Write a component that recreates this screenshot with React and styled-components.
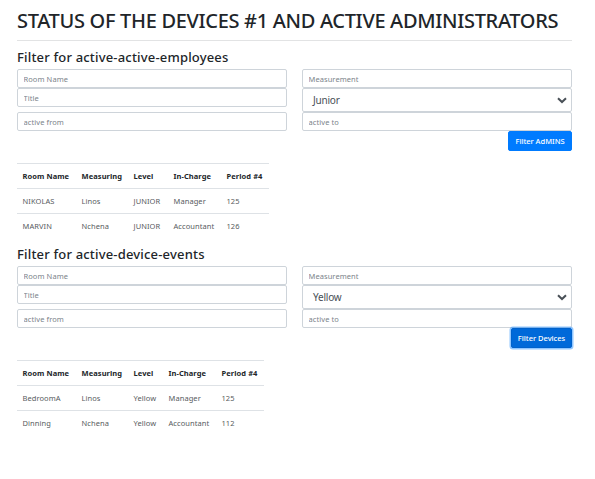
import React from "react";
import styled, { createGlobalStyle } from "styled-components";

const GlobalStyle = createGlobalStyle`
  *, *::before, *::after { box-sizing: border-box; }
  body {
    margin: 0;
    background: #fff;
    color: #212529;
    font-family: "Noto Sans", "Open Sans", sans-serif;
  }
`;

const Page = styled.main`
  width: 595px;
  height: 479px;
  padding: 0 23px 0 17px;
  overflow: hidden;
`;

const Title = styled.h1`
  height: 41px;
  margin: 0 0 8px;
  padding-top: 7px;
  border-bottom: 1px solid #e2e3e4;
  font-size: 20px;
  font-weight: 500;
  line-height: 28px;
  letter-spacing: -0.31px;
  white-space: nowrap;
`;

const Section = styled.section`
  height: 197px;
`;

const Heading = styled.h2`
  height: 20px;
  margin: 0;
  font-size: 13px;
  font-weight: 500;
  line-height: 17px;
  letter-spacing: 0.18px;
  white-space: nowrap;
`;

const Fields = styled.form`
  display: grid;
  grid-template-columns: 270px 270px;
  grid-template-rows: 19px 24px 19px 20px;
  column-gap: 15px;
  align-items: start;
  width: 555px;
`;

const Input = styled.input`
  width: 100%;
  height: 19px;
  margin: 0;
  padding: 1px 5.5px 0;
  border: 1px solid #ced4da;
  border-radius: 2px;
  background: #fff;
  font: 400 7.5px/16px "Noto Sans", sans-serif;
  letter-spacing: 0.08px;
  outline: none;
  &::placeholder { color: #7b838a; opacity: 1; }
`;

const SelectBox = styled.div`
  display: flex;
  align-items: center;
  justify-content: space-between;
  height: 24px;
  padding: 0 4px 0 10px;
  border: 1px solid #ced4da;
  border-radius: 2px;
  color: #495057;
  font-size: 10px;
  line-height: 20px;
  letter-spacing: -0.2px;
`;

const Chevron = styled.svg`
  width: 10px;
  height: 7px;
`;

const Submit = styled.button`
  grid-column: 2;
  justify-self: end;
  width: ${(p) => p.$width}px;
  height: 20px;
  padding: 0;
  border: 1px solid ${(p) => (p.$focused ? "#0062cc" : "#007bff")};
  border-radius: 2px;
  background: ${(p) => (p.$focused ? "#0069d9" : "#007bff")};
  box-shadow: ${(p) => (p.$focused ? "0 0 0 1.5px rgba(38, 143, 255, 0.5)" : "none")};
  color: #fff;
  font: 500 7.5px/18px "Noto Sans", sans-serif;
  letter-spacing: -0.02px;
  white-space: nowrap;
`;

const Table = styled.table`
  width: ${(p) => p.$width}px;
  margin-top: 12px;
  border-collapse: separate;
  border-spacing: 0;
  table-layout: fixed;
  font-size: 7.5px;
  line-height: 12px;
`;

const Col = styled.col`
  width: ${(p) => p.$width}px;
`;

const HeadCell = styled.th`
  height: 25px;
  padding: 0 0 1px 5.5px;
  border-top: 1px solid #dee2e6;
  font-weight: 700;
  letter-spacing: 0.08px;
  text-align: left;
  white-space: nowrap;
`;

const Cell = styled.td`
  height: 25px;
  padding: 0 0 1px 5.5px;
  border-top: 1px solid #dee2e6;
  color: #575b60;
  letter-spacing: 0.08px;
  white-space: nowrap;
`;

const columns = ["Room Name", "Measuring", "Level", "In-Charge", "Period #4"];

const panels = [
  {
    title: "Filter for active-active-employees",
    level: "Junior",
    button: { label: "Filter AdMINS", width: 64, focused: false },
    widths: [59, 52, 40, 53, 48],
    rows: [
      ["NIKOLAS", "Linos", "JUNIOR", "Manager", "125"],
      ["MARVIN", "Nchena", "JUNIOR", "Accountant", "126"],
    ],
  },
  {
    title: "Filter for active-device-events",
    level: "Yellow",
    button: { label: "Filter Devices", width: 61, focused: true },
    widths: [59, 52, 35, 53, 48],
    rows: [
      ["BedroomA", "Linos", "Yellow", "Manager", "125"],
      ["Dinning", "Nchena", "Yellow", "Accountant", "112"],
    ],
  },
];

function LevelSelect({ value }) {
  return (
    <SelectBox>
      <span>{value}</span>
      <Chevron viewBox="0 0 10 7" fill="none">
        <path d="M1 1.2 5 5 9 1.2" stroke="#495057" strokeWidth="2" />
      </Chevron>
    </SelectBox>
  );
}

function Panel({ title, level, button, widths, rows }) {
  return (
    <Section>
      <Heading>{title}</Heading>
      <Fields onSubmit={(e) => e.preventDefault()}>
        <Input placeholder="Room Name" />
        <Input placeholder="Measurement" />
        <Input placeholder="Title" />
        <LevelSelect value={level} />
        <Input placeholder="active from" />
        <Input placeholder="active to" />
        <Submit $width={button.width} $focused={button.focused}>
          {button.label}
        </Submit>
      </Fields>
      <Table $width={widths.reduce((a, b) => a + b, 0)}>
        <colgroup>
          {widths.map((w, i) => <Col key={i} $width={w} />)}
        </colgroup>
        <thead>
          <tr>{columns.map((c) => <HeadCell key={c}>{c}</HeadCell>)}</tr>
        </thead>
        <tbody>
          {rows.map((row) => (
            <tr key={row[0]}>{row.map((c, i) => <Cell key={i}>{c}</Cell>)}</tr>
          ))}
        </tbody>
      </Table>
    </Section>
  );
}

export default function App() {
  return (
    <>
      <GlobalStyle />
      <Page>
        <Title>STATUS OF THE DEVICES #1 AND ACTIVE ADMINISTRATORS</Title>
        {panels.map((p) => <Panel key={p.title} {...p} />)}
      </Page>
    </>
  );
}
